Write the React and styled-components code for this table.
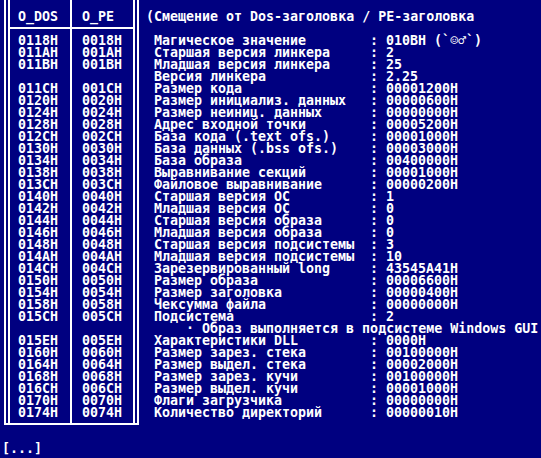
import React from 'react';
import styled, { createGlobalStyle, css } from 'styled-components';

const GlobalStyle = createGlobalStyle`
  html, body {
    margin: 0;
    padding: 0;
    background: #000080;
  }
`;

const textLine = css`
  box-sizing: border-box;
  height: 12px;
  padding-top: 1px;
  white-space: pre;
`;

const Screen = styled.div`
  width: 541px;
  height: 458px;
  overflow: hidden;
  background: #000080;
  color: #ffffff;
  font-family: "DejaVu Sans Mono", "Liberation Mono", monospace;
  font-weight: bold;
  font-size: 13.3px;
  line-height: 12px;
  display: flex;
  flex-direction: column;
`;

const Main = styled.div`
  display: flex;
  align-items: flex-start;
`;

const Frame = styled.div`
  margin-left: 4px;
  border: solid #ffffff;
  border-width: 0 2px 2px 2px;
  padding: 0 2px;
`;

const Table = styled.div`
  display: flex;
  border-left: 2px solid #ffffff;
  border-right: 2px solid #ffffff;
`;

const Column = styled.div`
  width: ${p => p.$width}px;
  padding: 10px 0 5px;
  border-left: ${p => (p.$divided ? '2px solid #ffffff' : 'none')};
`;

const Cell = styled.div`
  ${textLine};
  padding-left: ${p => p.$indent}px;
`;

const Rule = styled.div`
  height: 12px;
  display: flex;
  align-items: center;
  &::after {
    content: '';
    display: block;
    width: 100%;
    height: 2px;
    background: #ffffff;
  }
`;

const Info = styled.div`
  margin-left: 7px;
  padding-top: 10px;
  display: flex;
  flex-direction: column;
`;

const Title = styled.div`
  ${textLine};
`;

const Blank = styled.div`
  height: 12px;
`;

const InfoRow = styled.div`
  ${textLine};
  display: grid;
  grid-template-columns: 216px 16px auto;
  padding-left: 8px;
`;

const Note = styled.div`
  ${textLine};
  padding-left: 40px;
`;

const Glyph = styled.span`
  display: inline-block;
  width: 8px;
  text-align: center;
  font-weight: normal;
  font-size: 13px;
`;

const Footer = styled.div`
  ${textLine};
  margin-top: 17px;
  padding-left: 2px;
`;

const rows = [
  { dos: '0118H', pe: '0018H', name: 'Магическое значение', value: (<>010BH (`<Glyph>☺</Glyph><Glyph>♂</Glyph>`)</>) },
  { dos: '011AH', pe: '001AH', name: 'Старшая версия линкера', value: '2' },
  { dos: '011BH', pe: '001BH', name: 'Младшая версия линкера', value: '25' },
  { dos: '', pe: '', name: 'Версия линкера', value: '2.25' },
  { dos: '011CH', pe: '001CH', name: 'Размер кода', value: '00001200H' },
  { dos: '0120H', pe: '0020H', name: 'Размер инициализ. данных', value: '00000600H' },
  { dos: '0124H', pe: '0024H', name: 'Размер неиниц. данных', value: '00000000H' },
  { dos: '0128H', pe: '0028H', name: 'Адрес входной точки', value: '00005200H' },
  { dos: '012CH', pe: '002CH', name: 'База кода (.text ofs.)', value: '00001000H' },
  { dos: '0130H', pe: '0030H', name: 'База данных (.bss ofs.)', value: '00003000H' },
  { dos: '0134H', pe: '0034H', name: 'База образа', value: '00400000H' },
  { dos: '0138H', pe: '0038H', name: 'Выравнивание секций', value: '00001000H' },
  { dos: '013CH', pe: '003CH', name: 'Файловое выравнивание', value: '00000200H' },
  { dos: '0140H', pe: '0040H', name: 'Старшая версия ОС', value: '1' },
  { dos: '0142H', pe: '0042H', name: 'Младшая версия ОС', value: '0' },
  { dos: '0144H', pe: '0044H', name: 'Старшая версия образа', value: '0' },
  { dos: '0146H', pe: '0046H', name: 'Младшая версия образа', value: '0' },
  { dos: '0148H', pe: '0048H', name: 'Старшая версия подсистемы', value: '3' },
  { dos: '014AH', pe: '004AH', name: 'Младшая версия подсистемы', value: '10' },
  { dos: '014CH', pe: '004CH', name: 'Зарезервированный long', value: '43545A41H' },
  { dos: '0150H', pe: '0050H', name: 'Размер образа', value: '00006600H' },
  { dos: '0154H', pe: '0054H', name: 'Размер заголовка', value: '00000400H' },
  { dos: '0158H', pe: '0058H', name: 'Чексумма файла', value: '00000000H' },
  { dos: '015CH', pe: '005CH', name: 'Подсистема', value: '2' },
  { note: '· Образ выполняется в подсистеме Windows GUI' },
  { dos: '015EH', pe: '005EH', name: 'Характеристики DLL', value: '0000H' },
  { dos: '0160H', pe: '0060H', name: 'Размер зарез. стека', value: '00100000H' },
  { dos: '0164H', pe: '0064H', name: 'Размер выдел. стека', value: '00002000H' },
  { dos: '0168H', pe: '0068H', name: 'Размер зарез. кучи', value: '00100000H' },
  { dos: '016CH', pe: '006CH', name: 'Размер выдел. кучи', value: '00001000H' },
  { dos: '0170H', pe: '0070H', name: 'Флаги загрузчика', value: '00000000H' },
  { dos: '0174H', pe: '0074H', name: 'Количество директорий', value: '00000010H' },
];

export default function App() {
  return (
    <>
      <GlobalStyle />
      <Screen>
        <Main>
          <Frame>
            <Table>
              <Column $width={60}>
                <Cell $indent={8}>O_DOS</Cell>
                <Rule />
                {rows.map((r, i) => (
                  <Cell key={i} $indent={8}>{r.dos || ''}</Cell>
                ))}
              </Column>
              <Column $width={61} $divided>
                <Cell $indent={10}>O_PE</Cell>
                <Rule />
                {rows.map((r, i) => (
                  <Cell key={i} $indent={10}>{r.pe || ''}</Cell>
                ))}
              </Column>
            </Table>
          </Frame>
          <Info>
            <Title>(Смещение от Dos-заголовка / PE-заголовка</Title>
            <Blank />
            {rows.map((r, i) =>
              r.note ? (
                <Note key={i}>{r.note}</Note>
              ) : (
                <InfoRow key={i}>
                  <span>{r.name}</span>
                  <span>:</span>
                  <span>{r.value}</span>
                </InfoRow>
              )
            )}
          </Info>
        </Main>
        <Footer>[...]</Footer>
      </Screen>
    </>
  );
}
